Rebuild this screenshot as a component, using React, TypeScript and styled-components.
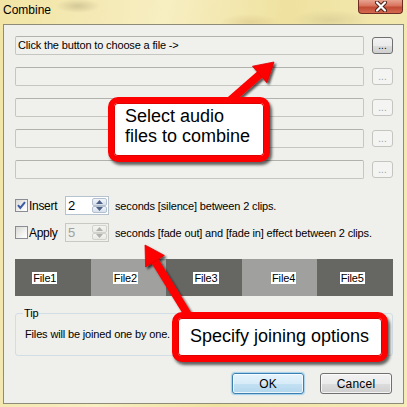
import React from "react";
import styled, { createGlobalStyle } from "styled-components";

const GlobalStyle = createGlobalStyle`
  html, body { margin: 0; padding: 0; }
  body {
    width: 407px;
    height: 407px;
    overflow: hidden;
    font-family: "Liberation Sans", Arial, sans-serif;
  }
  * { box-sizing: border-box; }
`;

const Window = styled.div`
  position: relative;
  width: 407px;
  height: 407px;
  display: flex;
  flex-direction: column;
  background:
    radial-gradient(ellipse 22px 7px at 78px 6px, rgba(150, 140, 100, 0.35), transparent),
    radial-gradient(ellipse 30px 8px at 250px 22px, rgba(200, 170, 110, 0.3), transparent),
    radial-gradient(ellipse 40px 10px at 330px 20px, rgba(170, 160, 120, 0.25), transparent),
    linear-gradient(100deg, #f1e4a4 0%, #f7eec2 35%, #efe2a0 60%, #f5ebb8 100%);
`;

const TitleBar = styled.div`
  height: 24px;
  flex: none;
  display: flex;
  justify-content: space-between;
  align-items: flex-start;
  padding: 0 4px 0 3px;
`;

const Title = styled.span`
  margin-top: 3px;
  font: 12px/14px "Liberation Sans", Arial, sans-serif;
  color: #000;
`;

const CloseButton = styled.div`
  width: 45px;
  height: 14px;
  border: 1px solid #6e2d22;
  border-top: none;
  border-radius: 0 0 4px 4px;
  background: linear-gradient(#e8a390 0%, #d9735d 45%, #c24a33 55%, #d46a50 100%);
  display: flex;
  align-items: center;
  justify-content: center;
`;

const Client = styled.div`
  flex: 1;
  margin: 0 3px 3px;
  border: 1px solid #8e8b78;
  background: #efefeb;
  padding: 11px 10px 0 11px;
  display: flex;
  flex-direction: column;
  font-size: 11px;
  letter-spacing: -0.15px;
  color: #000;
`;

const FileList = styled.div`
  display: flex;
  flex-direction: column;
  gap: 12px;
`;

const FileRow = styled.div`
  display: flex;
  align-items: center;
  gap: 8px;
  height: 19px;
`;

const PathField = styled.div`
  flex: 1;
  height: 19px;
  border: 1px solid #c6c6c1;
  border-top-color: #b2b2ad;
  border-radius: 2px;
  background: #f0f0ec;
  padding-left: 2px;
  line-height: 17px;
  white-space: nowrap;
`;

const BrowseButton = styled.div<{ $enabled?: boolean }>`
  width: 21px;
  height: 17px;
  flex: none;
  border: 1px solid ${(p) => (p.$enabled ? "#707070" : "#c4c4c0")};
  border-radius: 3px;
  background: ${(p) =>
    p.$enabled
      ? "linear-gradient(#f2f2f2 0%, #ebebeb 50%, #dddddd 51%, #cfcfcf 100%)"
      : "#f4f4f2"};
  color: ${(p) => (p.$enabled ? "#000" : "#a3a3a0")};
  display: flex;
  align-items: flex-end;
  justify-content: center;
  font-size: 10px;
  line-height: 12px;
  letter-spacing: 0;
  padding-bottom: 1px;
`;

const Options = styled.div`
  margin-top: 17px;
  display: flex;
  flex-direction: column;
  gap: 8px;
`;

const OptionRow = styled.div`
  display: flex;
  align-items: center;
  height: 19px;
`;

const CheckBox = styled.span`
  width: 13px;
  height: 13px;
  flex: none;
  border: 1px solid #8a8e94;
  background: linear-gradient(135deg, #d8d8d4 0%, #f6f6f4 70%, #ffffff 100%);
  display: flex;
  align-items: center;
  justify-content: center;
`;

const OptionLabel = styled.span`
  width: 37px;
  padding-left: 1px;
  font-size: 12px;
  letter-spacing: -0.3px;
`;

const Spin = styled.div<{ $disabled?: boolean }>`
  width: 44px;
  height: 19px;
  flex: none;
  display: flex;
  margin-right: 6px;
  padding: 1px;
  border: 1px solid ${(p) => (p.$disabled ? "#c9c9c3" : "#b7c2cf")};
  background: ${(p) => (p.$disabled ? "#efefeb" : "#ffffff")};
`;

const SpinValue = styled.span<{ $disabled?: boolean }>`
  flex: 1;
  padding-left: 1px;
  font-size: 13px;
  line-height: 15px;
  color: ${(p) => (p.$disabled ? "#a0a09c" : "#000")};
`;

const SpinButtons = styled.div`
  width: 15px;
  display: flex;
  flex-direction: column;
`;

const SpinArrow = styled.div<{ $disabled?: boolean }>`
  flex: 1;
  border: 1px solid ${(p) => (p.$disabled ? "#d2d2cd" : "#b3c0d0")};
  border-radius: 2px;
  background: ${(p) =>
    p.$disabled
      ? "linear-gradient(#f4f4f2, #e8e8e4)"
      : "linear-gradient(#f1f5fa, #d6e0ec)"};
  display: flex;
  align-items: center;
  justify-content: center;
`;

const OptionText = styled.span`
  white-space: nowrap;
`;

const FileBar = styled.div`
  margin-top: 17px;
  height: 37px;
  display: flex;
`;

const Segment = styled.div<{ $dark: boolean }>`
  flex: 1;
  background: ${(p) => (p.$dark ? "#666763" : "#a0a19e")};
  display: flex;
  align-items: center;
  justify-content: center;
`;

const SegmentLabel = styled.span<{ $shift: number }>`
  background: #ffffff;
  line-height: 12px;
  padding: 0 1px;
  transform: translateX(${(p) => p.$shift}px);
`;

const TipBox = styled.fieldset`
  margin: 11px 0 0;
  padding: 0 9px 14px 7px;
  border: 1px solid #d3dde6;
  border-radius: 3px;
  min-width: 0;
`;

const TipLegend = styled.legend`
  padding: 0 1px;
  line-height: 13px;
`;

const TipText = styled.p`
  margin: 8px 0 0 2px;
  line-height: 13px;
`;

const ButtonRow = styled.div`
  margin-top: 17px;
  display: flex;
  justify-content: flex-end;
  gap: 16px;
  padding-right: 1px;
`;

const DialogButton = styled.div<{ $default?: boolean }>`
  width: 72px;
  height: 21px;
  border-radius: 3px;
  border: 1px solid ${(p) => (p.$default ? "#3c7fb1" : "#707070")};
  background: ${(p) =>
    p.$default
      ? "linear-gradient(#e6f3fb 0%, #d7ecf8 50%, #c3e1f3 51%, #b3d6ec 100%)"
      : "linear-gradient(#f2f2f2 0%, #ebebeb 50%, #dddddd 51%, #cfcfcf 100%)"};
  box-shadow: inset 0 0 0 1px rgba(255, 255, 255, 0.75)
    ${(p) => (p.$default ? ", 0 0 1px 1px rgba(110, 190, 235, 0.6)" : "")};
  display: flex;
  align-items: center;
  justify-content: center;
  font-size: 12px;
  letter-spacing: 0.2px;
  line-height: 14px;
`;

const Overlay = styled.div`
  position: absolute;
  inset: 0;
  pointer-events: none;
`;

const ArrowLayer = styled.svg`
  position: absolute;
  left: 0;
  top: 0;
  width: 407px;
  height: 407px;
  overflow: visible;
`;

const Callout = styled.div<{ $x: number; $y: number; $w: number; $h: number; $pt: number; $pl: number }>`
  position: absolute;
  left: ${(p) => p.$x}px;
  top: ${(p) => p.$y}px;
  width: ${(p) => p.$w}px;
  height: ${(p) => p.$h}px;
  padding: ${(p) => p.$pt}px 0 0 ${(p) => p.$pl}px;
  border: 6px solid #ff0000;
  border-radius: 10px;
  background: #ffffff;
  box-shadow: inset 0 0 0 1px #e00000, 2px 3px 3px rgba(0, 0, 0, 0.6);
  font: 18px/20px "Liberation Sans", Arial, sans-serif;
  color: #000;
  white-space: nowrap;
`;

const CheckMark = () => (
  <svg width="11" height="11" viewBox="0 0 11 11">
    <path d="M2 5.2 L4.3 8 L9 2.2" fill="none" stroke="#3a5aa4" strokeWidth="2" />
  </svg>
);

const Tri = ({ up, color }: { up: boolean; color: string }) => (
  <svg width="7" height="4" viewBox="0 0 7 4">
    <polygon points={up ? "0,4 7,4 3.5,0" : "0,0 7,0 3.5,4"} fill={color} />
  </svg>
);

const Arrow = ({ tail, tip }: { tail: [number, number]; tip: [number, number] }) => {
  const dx = tip[0] - tail[0];
  const dy = tip[1] - tail[1];
  const len = Math.hypot(dx, dy);
  const ux = dx / len;
  const uy = dy / len;
  const nx = -uy;
  const ny = ux;
  const hl = 19;
  const hw = 11;
  const bx = tip[0] - ux * hl;
  const by = tip[1] - uy * hl;
  const pts = `${tip[0]},${tip[1]} ${bx + nx * hw},${by + ny * hw} ${bx - nx * hw},${by - ny * hw}`;
  return (
    <g filter="url(#arrowShadow)">
      <line x1={tail[0]} y1={tail[1]} x2={bx + ux * 2} y2={by + uy * 2} stroke="#ff0000" strokeWidth="8" />
      <polygon points={pts} fill="#ff0000" stroke="#e00000" strokeWidth="0.8" />
    </g>
  );
};

const files = [
  { name: "File1", dark: true, shift: -8 },
  { name: "File2", dark: false, shift: -3 },
  { name: "File3", dark: true, shift: 2 },
  { name: "File4", dark: false, shift: 4 },
  { name: "File5", dark: true, shift: -3 },
];

export default function App() {
  return (
    <>
      <GlobalStyle />
      <Window>
        <TitleBar>
          <Title>Combine</Title>
          <CloseButton>
            <svg width="14" height="11" viewBox="0 0 14 11">
              <path d="M3 1.5 L11 9.5 M11 1.5 L3 9.5" stroke="#4a1e16" strokeWidth="4" strokeLinecap="round" />
              <path d="M3 1.5 L11 9.5 M11 1.5 L3 9.5" stroke="#ffffff" strokeWidth="2.2" strokeLinecap="round" />
            </svg>
          </CloseButton>
        </TitleBar>
        <Client>
          <FileList>
            {[0, 1, 2, 3, 4].map((i) => (
              <FileRow key={i}>
                <PathField>{i === 0 ? "Click the button to choose a file ->" : ""}</PathField>
                <BrowseButton $enabled={i === 0}>...</BrowseButton>
              </FileRow>
            ))}
          </FileList>
          <Options>
            <OptionRow>
              <CheckBox>
                <CheckMark />
              </CheckBox>
              <OptionLabel>Insert</OptionLabel>
              <Spin>
                <SpinValue>2</SpinValue>
                <SpinButtons>
                  <SpinArrow>
                    <Tri up color="#4d5f84" />
                  </SpinArrow>
                  <SpinArrow>
                    <Tri up={false} color="#4d5f84" />
                  </SpinArrow>
                </SpinButtons>
              </Spin>
              <OptionText>seconds [silence] between 2 clips.</OptionText>
            </OptionRow>
            <OptionRow>
              <CheckBox />
              <OptionLabel>Apply</OptionLabel>
              <Spin $disabled>
                <SpinValue $disabled>5</SpinValue>
                <SpinButtons>
                  <SpinArrow $disabled>
                    <Tri up color="#b0b0ac" />
                  </SpinArrow>
                  <SpinArrow $disabled>
                    <Tri up={false} color="#b0b0ac" />
                  </SpinArrow>
                </SpinButtons>
              </Spin>
              <OptionText>seconds [fade out] and [fade in] effect between 2 clips.</OptionText>
            </OptionRow>
          </Options>
          <FileBar>
            {files.map((f) => (
              <Segment key={f.name} $dark={f.dark}>
                <SegmentLabel $shift={f.shift}>{f.name}</SegmentLabel>
              </Segment>
            ))}
          </FileBar>
          <TipBox>
            <TipLegend>Tip</TipLegend>
            <TipText>Files will be joined one by one.</TipText>
          </TipBox>
          <ButtonRow>
            <DialogButton $default>OK</DialogButton>
            <DialogButton>Cancel</DialogButton>
          </ButtonRow>
        </Client>
        <Overlay>
          <ArrowLayer viewBox="0 0 407 407">
            <defs>
              <filter id="arrowShadow" x="-20%" y="-20%" width="140%" height="140%">
                <feDropShadow dx="2" dy="2" stdDeviation="1.2" floodColor="#000" floodOpacity="0.65" />
              </filter>
            </defs>
            <Arrow tail={[226, 104]} tip={[274, 62]} />
            <Arrow tail={[190, 318]} tip={[145, 245]} />
          </ArrowLayer>
          <Callout $x={108} $y={97} $w={162} $h={65} $pt={3} $pl={11}>
            Select audio
            <br />
            files to combine
          </Callout>
          <Callout $x={172} $y={312} $w={216} $h={50} $pt={8} $pl={12}>
            Specify joining options
          </Callout>
        </Overlay>
      </Window>
    </>
  );
}
